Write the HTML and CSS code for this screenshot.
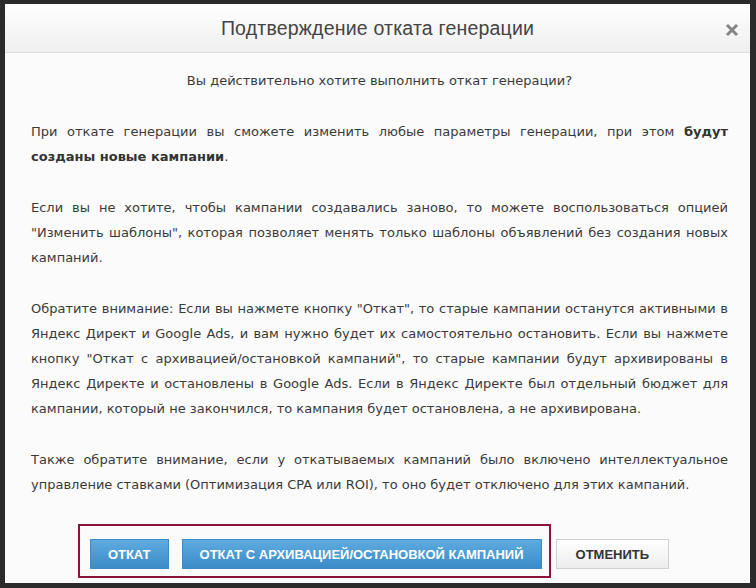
FILE: index.html
```html
<!DOCTYPE html>
<html lang="ru">
<head>
    <meta charset="UTF-8">
    <title>Подтверждение отката генерации</title>
    <link rel="stylesheet" href="styles.css">
</head>
<body>
    <!-- Rollback Dialog -->
    <div class="modal">
        <div class="modal-header">
            <div class="modal-title">Подтверждение отката генерации</div>
            <div class="close-button" id="closeButton">
                <svg width="12" height="12" viewBox="0 0 12 12">
                    <path d="M2 2 L10 10 M10 2 L2 10" stroke="#858585" stroke-width="3" stroke-linecap="square"/>
                </svg>
            </div>
        </div>

        <div class="modal-body">
            <p class="question">Вы действительно хотите выполнить откат генерации?</p>
            <p>При откате генерации вы сможете изменить любые параметры генерации, при этом <b>будут созданы новые кампании</b>.</p>
            <p>Если вы не хотите, чтобы кампании создавались заново, то можете воспользоваться опцией "Изменить шаблоны", которая позволяет менять только шаблоны объявлений без создания новых кампаний.</p>
            <p>Обратите внимание: Если вы нажмете кнопку "Откат", то старые кампании останутся активными в Яндекс Директ и Google Ads, и вам нужно будет их самостоятельно остановить. Если вы нажмете кнопку "Откат с архивацией/остановкой кампаний", то старые кампании будут архивированы в Яндекс Директе и остановлены в Google Ads. Если в Яндекс Директе был отдельный бюджет для кампании, который не закончился, то кампания будет остановлена, а не архивирована.</p>
            <p>Также обратите внимание, если у откатываемых кампаний было включено интеллектуальное управление ставками (Оптимизация CPA или ROI), то оно будет отключено для этих кампаний.</p>
        </div>

        <div class="modal-footer">
            <div class="highlight-box">
                <button class="btn btn-primary" id="rollbackButton">Откат</button>
                <button class="btn btn-primary" id="rollbackArchiveButton">Откат с архивацией/остановкой кампаний</button>
            </div>
            <button class="btn btn-default" id="cancelButton">Отменить</button>
        </div>
    </div>
</body>
</html>
```

FILE: styles.css
```css
/* Basic Styling */
body {
    margin: 0;
    padding: 4px 6px 5px 5px;
    background-color: #2b2b2b;
    font-family: "DejaVu Sans", Verdana, sans-serif;
    color: #3a3a3a;
    height: 588px;
    box-sizing: border-box;
}

.modal {
    background-color: #fbfbfb;
    height: 100%;
    display: flex;
    flex-direction: column;
}

.modal-header {
    position: relative;
    height: 48px;
    background: linear-gradient(180deg, #ffffff, #efefef);
    border-bottom: 1px solid #dcdcdc;
    display: flex;
    align-items: center;
    justify-content: center;
}

.modal-title {
    font-family: "Liberation Sans", Arial, sans-serif;
    font-size: 19.5px;
    color: #444;
    letter-spacing: 0.2px;
}

.close-button {
    position: absolute;
    top: 17px;
    right: 12px;
    cursor: pointer;
}

.modal-body {
    padding: 15px 22px 0 26px;
    font-size: 13px;
    line-height: 25px;
}

.modal-body p {
    margin: 0 0 26px;
    text-align: justify;
}

.modal-body p:last-child {
    margin-bottom: 0;
}

.modal-body .question {
    text-align: center;
}

.modal-body b {
    color: #333;
}

.modal-footer {
    margin-top: auto;
    padding: 0 8px 5px 0;
    display: flex;
    align-items: flex-end;
    justify-content: center;
}

/* Red outline around the rollback buttons */
.highlight-box {
    border: 2px solid #8b1539;
    padding: 13px 7px 7px 10px;
    display: flex;
    gap: 13px;
}

.btn {
    height: 30px;
    padding: 0 17px;
    font-family: "Liberation Sans", Arial, sans-serif;
    font-size: 13px;
    font-weight: bold;
    text-transform: uppercase;
    cursor: pointer;
    border-radius: 0;
}

.btn-primary {
    color: #fff;
    background: linear-gradient(180deg, #5eabe0, #3b8bc8);
    border: 1px solid #3d8cc7;
}

.btn-default {
    color: #333;
    background: linear-gradient(180deg, #ffffff, #ededed);
    border: 1px solid #cfcfcf;
    margin: 0 0 9px 5px;
    padding: 0 19px;
}
```
